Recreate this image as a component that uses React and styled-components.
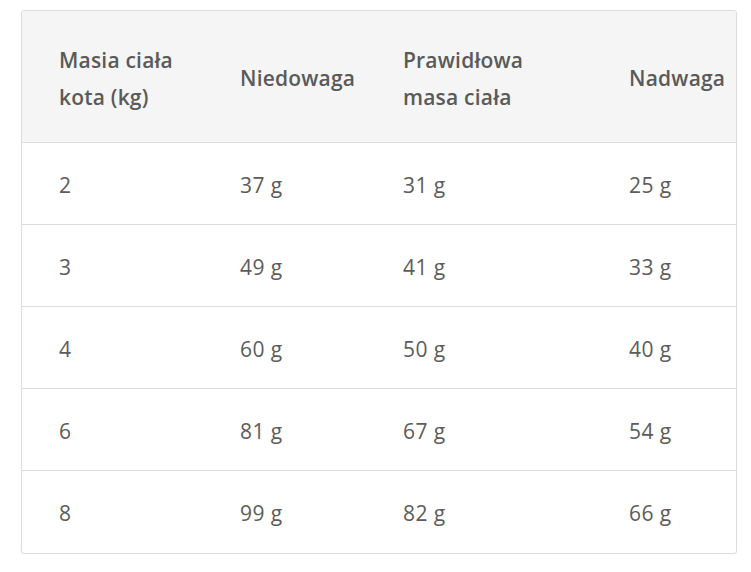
import React from "react";
import styled, { createGlobalStyle } from "styled-components";

const Global = createGlobalStyle`
  html, body { margin: 0; padding: 0; background: #fff; }
  body { font-family: "Open Sans", "Noto Sans", sans-serif; }
`;

const Wrap = styled.div`
  padding: 10px 14px 0 21px;
`;

const Table = styled.table`
  width: 716px;
  border-collapse: separate;
  border-spacing: 0;
  border: 1px solid #dcdcdc;
  border-radius: 3px;
  box-shadow: 0 1px 1px rgba(0,0,0,0.06);
  overflow: hidden;
  table-layout: fixed;
  color: #5c5c5c;
`;

const Th = styled.th`
  width: ${p => p.$w}px;
  background: #f5f5f5;
  height: 132px;
  padding: 4px 0 0 37px;
  text-align: left;
  font-size: 21px;
  font-weight: 600;
  letter-spacing: 0.2px;
  line-height: 37px;
  color: #5a5a5a;
  border-bottom: 1px solid #dcdcdc;
  box-sizing: border-box;
  vertical-align: middle;
`;

const Td = styled.td`
  height: 82px;
  padding: 2px 0 0 37px;
  font-size: 21px;
  font-weight: 400;
  letter-spacing: 0.4px;
  color: #5c5c5c;
  border-bottom: ${p => (p.$last ? "none" : "1px solid #dcdcdc")};
  box-sizing: border-box;
  vertical-align: middle;
`;

const cols = [
  { w: 181, label: ["Masia ciała", "kota (kg)"] },
  { w: 163, label: ["Niedowaga"] },
  { w: 226, label: ["Prawidłowa", "masa ciała"] },
  { w: 144, label: ["Nadwaga"] },
];

const rows = [
  ["2", "37 g", "31 g", "25 g"],
  ["3", "49 g", "41 g", "33 g"],
  ["4", "60 g", "50 g", "40 g"],
  ["6", "81 g", "67 g", "54 g"],
  ["8", "99 g", "82 g", "66 g"],
];

export default function App() {
  return (
    <Wrap>
      <Global />
      <Table>
        <thead>
          <tr>
            {cols.map((c, i) => (
              <Th key={i} $w={c.w}>
                {c.label.map((l, j) => (
                  <React.Fragment key={j}>
                    {j > 0 && <br />}
                    {l}
                  </React.Fragment>
                ))}
              </Th>
            ))}
          </tr>
        </thead>
        <tbody>
          {rows.map((r, i) => (
            <tr key={i}>
              {r.map((v, j) => (
                <Td key={j} $last={i === rows.length - 1}>{v}</Td>
              ))}
            </tr>
          ))}
        </tbody>
      </Table>
    </Wrap>
  );
}
